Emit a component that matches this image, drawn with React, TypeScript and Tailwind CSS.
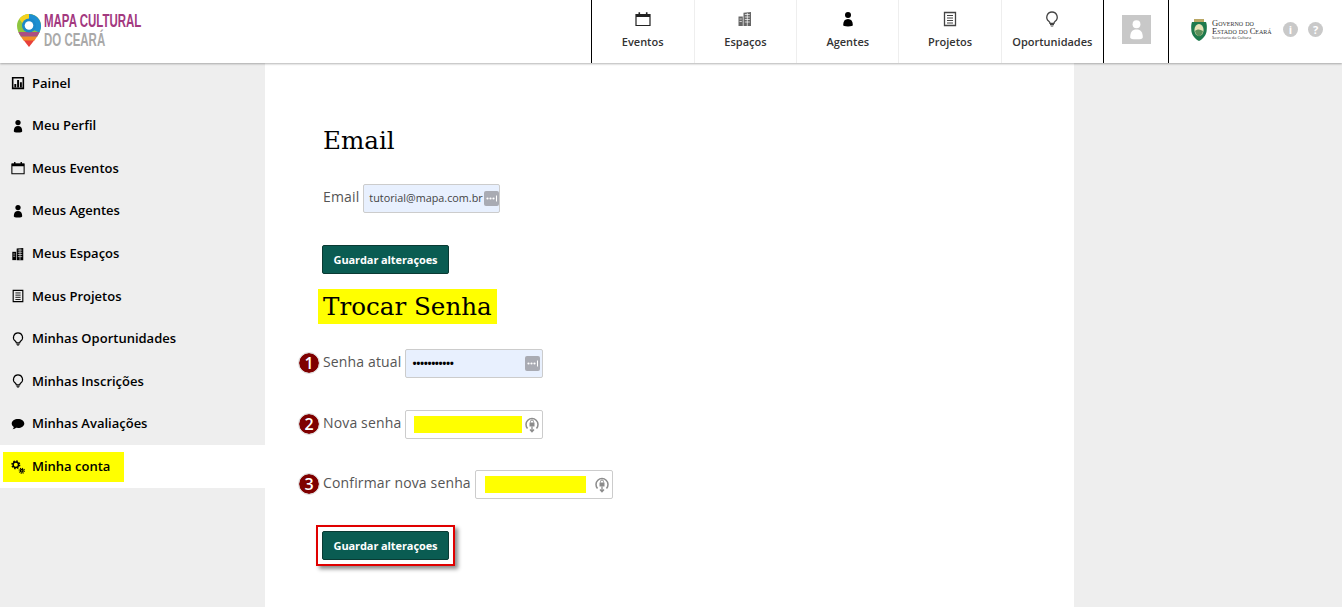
const navItems = [
  { label: "Eventos", icon: "calendar", tone: "text-[#222]" },
  { label: "Espaços", icon: "building", tone: "text-[#666]" },
  { label: "Agentes", icon: "person", tone: "text-black" },
  { label: "Projetos", icon: "doc", tone: "text-[#444]" },
  { label: "Oportunidades", icon: "bulb", tone: "text-[#444]" }
];

const sideItems = [
  { label: "Painel", icon: "chart" },
  { label: "Meu Perfil", icon: "person" },
  { label: "Meus Eventos", icon: "calendar" },
  { label: "Meus Agentes", icon: "person" },
  { label: "Meus Espaços", icon: "building" },
  { label: "Meus Projetos", icon: "doc" },
  { label: "Minhas Oportunidades", icon: "bulb" },
  { label: "Minhas Inscrições", icon: "bulb" },
  { label: "Minhas Avaliações", icon: "chat" }
];

function Glyph({ name, className }: { name: string; className?: string }) {
  return (
    <svg viewBox="0 0 16 16" className={className} fill="currentColor">
      {name === "calendar" && (
        <>
          <path d="M1 3.500h14v11H1z" fill="none" stroke="currentColor" strokeWidth="1.200" />
          <path d="M1 3h14v3H1z" />
          <path d="M3.500 1.200h1.600v3H3.500zM10.900 1.200h1.600v3h-1.600z" />
        </>
      )}
      {name === "building" && (
        <>
          <path d="M6.500 1.800l7.500-.8v14H6.500z" />
          <path d="M1.500 5.500h4.300V15H1.500z" />
          <path d="M7.800 3.500h5M7.800 6h5M7.800 8.500h5M7.800 11h5M2.500 8h2.300M2.500 10.500h2.300M10.300 2v13" stroke="#fff" strokeWidth="0.700" />
        </>
      )}
      {name === "person" && (
        <>
          <circle cx="8" cy="4" r="3" />
          <path d="M3.200 14c0-4 1.600-6 4.800-6s4.800 2 4.800 6c0 1-1.600 1.400-4.800 1.400S3.200 15 3.200 14z" />
        </>
      )}
      {name === "doc" && (
        <>
          <path d="M2.500 1.500h11v13h-11z" fill="none" stroke="currentColor" strokeWidth="1.300" />
          <path d="M5 4.500h6M5 7h6M5 9.500h6M5 12h6" stroke="currentColor" strokeWidth="1" />
        </>
      )}
      {name === "bulb" && (
        <>
          <path
            d="M8 1a5.200 5.200 0 0 0-3.200 9.300c.7.600 1.200 1.200 1.200 2h4c0-.8.500-1.400 1.200-2A5.200 5.200 0 0 0 8 1z"
            fill="none"
            stroke="currentColor"
            strokeWidth="1.300"
          />
          <path d="M6 13h4v1.200H6zM6.800 14.700h2.400v.8H6.800z" />
        </>
      )}
      {name === "chart" && (
        <>
          <path d="M1 1h14v14H1zM2.800 2.800v10.400h10.400V2.800z" fillRule="evenodd" />
          <path d="M3.800 9h2.200v4.200H3.800zM7 4.500h2.200v8.700H7zM10.200 7h2.200v6.200h-2.200z" />
        </>
      )}
      {name === "chat" && <path d="M8 2.200c4 0 7.200 2.300 7.200 5.200S12 12.600 8 12.600c-.8 0-1.500-.1-2.200-.2-.9.9-2.300 1.500-4 1.600.8-.8 1.300-1.700 1.400-2.600C1.700 10.400.8 9 .8 7.400.8 4.500 4 2.200 8 2.200z" />}
      {name === "gears" && (
        <>
          <circle cx="5.500" cy="5.500" r="4.300" fill="none" stroke="currentColor" strokeWidth="1.800" strokeDasharray="1.700 1.680" />
          <circle cx="5.500" cy="5.500" r="3.100" fill="none" stroke="currentColor" strokeWidth="1.700" />
          <circle cx="12.300" cy="12.300" r="3" fill="none" stroke="currentColor" strokeWidth="1.200" strokeDasharray="1.200 1.150" />
          <circle cx="12.300" cy="12.300" r="1.500" fill="none" stroke="currentColor" strokeWidth="1.600" />
        </>
      )}
    </svg>
  );
}

function PinLogo() {
  return (
    <svg viewBox="0 0 24 33" className="h-[33px] w-[24px] shrink-0">
      <path d="M12 33 6.500 26h11z" fill="#e8403a" />
      <path d="M3.500 22h17l-3 4.500h-11z" fill="#f28c28" />
      <path d="M12 0C5.400 0 0 5.300 0 11.800c0 3.900 1.500 7.300 3.800 10.700h16.400c2.300-3.400 3.800-6.800 3.800-10.700C24 5.300 18.600 0 12 0z" fill="#8ec63f" />
      <path d="M12 0C8 0 4.500 2 2.300 5l8 11 13.500-5C23.300 5 18.200 0 12 0z" fill="#f6d21f" />
      <path d="M12 0c6.600 0 12 5.300 12 11.800 0 2.400-.6 4.600-1.600 6.700L12 14z" fill="#1d8fd1" />
      <path d="M4 22.500c-1-1.500-1.900-3-2.600-4.600l21.200 0c-.7 1.600-1.500 3.100-2.500 4.600z" fill="#b0388f" opacity=".85" />
      <circle cx="12" cy="11.500" r="7" fill="#1c88c9" />
      <circle cx="12" cy="11.500" r="4.300" fill="#fff" />
    </svg>
  );
}

function Crest() {
  return (
    <svg viewBox="0 0 16 22" className="h-[22px] w-[16px] shrink-0">
      <path d="M3 0h10v3H3z" fill="#b9a765" />
      <path d="M1 3h14c1 3 1 5 .6 9-.4 4-3.600 8-7.600 10-4-2-7.200-6-7.600-10C0 8 0 6 1 3z" fill="#1f7a4d" />
      <ellipse cx="8" cy="11" rx="4.600" ry="6" fill="#e7e2b8" />
      <path d="M4 12c2-2 5-2 8 0-.5 3-2 5-4 5.500-2-.5-3.500-2.500-4-5.500z" fill="#5c8f5a" />
    </svg>
  );
}

function KeyBadge() {
  return (
    <svg viewBox="0 0 15 15" className="h-[15px] w-[15px] shrink-0">
      <rect width="15" height="15" rx="2" fill="#a9abb3" />
      <circle cx="3.500" cy="7.500" r="1.100" fill="#fff" />
      <circle cx="6.500" cy="7.500" r="1.100" fill="#fff" />
      <circle cx="9.500" cy="7.500" r="1.100" fill="#fff" />
      <path d="M12.500 4.500v6" stroke="#fff" strokeWidth="1" />
    </svg>
  );
}

function LockRefresh() {
  return (
    <svg viewBox="0 0 14 16" className="h-[16px] w-[14px] shrink-0 text-[#8c8c8c]" fill="none" stroke="currentColor">
      <path d="M2.500 11.500A6 6 0 1 1 11.500 11.500" strokeWidth="1.500" />
      <path d="M7 9.500v4.500M5 12.500l2 2.300 2-2.300" strokeWidth="1.300" />
      <rect x="4.500" y="5.500" width="5" height="4" fill="currentColor" stroke="none" />
      <path d="M5.500 5.500V4.500a1.500 1.500 0 0 1 3 0v1" strokeWidth="1" />
    </svg>
  );
}

function Marker({ n }: { n: number }) {
  return (
    <span className="absolute left-[-24px] top-1/2 flex h-[20px] w-[20px] -translate-y-[11px] items-center justify-center rounded-full bg-[#7f0000] text-[16px] font-semibold leading-none text-white outline outline-1 outline-[#ddd]">
      {n}
    </span>
  );
}

function Field({
  label,
  marker,
  children,
  filled,
  width = "w-[138px]"
}: {
  label: string;
  marker?: number;
  children: React.ReactNode;
  filled?: boolean;
  width?: string;
}) {
  return (
    <div className="relative flex items-center gap-[4px]">
      {marker && <Marker n={marker} />}
      <span className="pb-[3px] text-[14px] leading-[20px] tracking-[0.15px] text-[#555]">{label}</span>
      <div
        className={`flex h-[29px] ${width} items-center justify-between rounded-[2px] border border-[#ccc] ${
          filled ? "bg-[#e8f0fe]" : "bg-white"
        }`}
      >
        {children}
      </div>
    </div>
  );
}

function SaveButton() {
  return (
    <button className="h-[29px] w-[127px] rounded-[2px] border border-[#0a3a33] bg-[#0a5c52] pt-px text-[11px] font-bold tracking-[-0.1px] text-white">
      Guardar alteraçoes
    </button>
  );
}

export default function App() {
  return (
    <div className="flex h-[607px] w-[1342px] flex-col overflow-hidden bg-white font-['Open_Sans',sans-serif]">
      <header className="relative z-10 flex h-[63px] shrink-0 items-stretch justify-between bg-white shadow-[0_1px_2px_rgba(0,0,0,0.3)]">
        <div className="flex items-center gap-[3px] pb-[3px] pl-[17px]">
          <PinLogo />
          <div className="font-['Liberation_Sans',sans-serif] text-[18.500px] font-bold leading-[19px]">
            <div className="origin-left scale-x-[0.62] whitespace-nowrap text-[#a3397f]">MAPA CULTURAL</div>
            <div className="origin-left scale-x-[0.62] whitespace-nowrap text-[#a9a9a9]">DO CEARÁ</div>
          </div>
        </div>
        <div className="flex items-stretch">
          <nav className="flex border-l border-black">
            {navItems.map((item, i) => (
              <div
                key={item.label}
                className={`flex w-[102.300px] flex-col items-center pt-[11px] ${i > 0 ? "border-l border-[#eee]" : ""}`}
              >
                <Glyph name={item.icon} className={`h-[16px] w-[16px] ${item.tone}`} />
                <span className="mt-[7px] whitespace-nowrap text-[11px] font-semibold text-[#333]">
                  {item.label}
                </span>
              </div>
            ))}
          </nav>
          <div className="flex w-[66px] items-center justify-center border-x border-black pb-[4px]">
            <div className="flex h-[29px] w-[29px] items-center justify-center bg-[#c8c8c8]">
              <Glyph name="person" className="h-[21px] w-[21px] text-white" />
            </div>
          </div>
          <div className="flex w-[173px] items-center pb-[4px] pl-[22px]">
            <Crest />
            <div className="ml-[5px] w-[62px] font-['Liberation_Serif',serif] text-[8.500px] leading-[8px] text-[#333] [font-variant:small-caps]">
              <div className="whitespace-nowrap">Governo do</div>
              <div className="whitespace-nowrap">Estado do Ceará</div>
              <div className="whitespace-nowrap font-['Open_Sans',sans-serif] text-[4px] leading-[5px] [font-variant:normal]">Secretaria da Cultura</div>
            </div>
            <span className="ml-[9px] flex h-[15px] w-[15px] items-center justify-center rounded-full bg-[#c9c9c9] text-[11px] font-bold leading-none text-white">
              i
            </span>
            <span className="ml-[10px] flex h-[15px] w-[15px] items-center justify-center rounded-full bg-[#c9c9c9] text-[11px] font-bold leading-none text-white">
              ?
            </span>
          </div>
        </div>
      </header>

      <div className="flex min-h-0 flex-1">
        <aside className="-mt-px w-[265px] shrink-0 bg-[#eee]">
          {sideItems.map((item) => (
            <div key={item.label} className="flex h-[42.600px] items-center gap-[7px] pl-[11px] text-[13px] font-semibold text-black">
              <Glyph name={item.icon} className="h-[14px] w-[14px] shrink-0" />
              {item.label}
            </div>
          ))}
          <div className="flex h-[42.600px] items-center bg-white pl-[3px]">
            <div className="flex h-[30px] w-[121px] items-center gap-[7px] bg-[#ff0] pl-[8px] text-[13px] font-semibold text-black">
              <Glyph name="gears" className="h-[14px] w-[14px] shrink-0" />
              Minha conta
            </div>
          </div>
        </aside>

        <main className="flex w-[809px] shrink-0 flex-col items-start bg-white pl-[57px] pt-[60px]">
          <h2 className="ml-px h-[36px] font-['DejaVu_Serif',serif] text-[24.600px] leading-[36px] text-black">Email</h2>
          <div className="ml-px mt-[25px]">
            <Field label="Email" filled width="w-[137px]">
              <span className="whitespace-nowrap pl-[5px] text-[10.800px] text-[#444]">tutorial@mapa.com.br</span>
              <KeyBadge />
            </Field>
          </div>
          <div className="mt-[32px]">
            <SaveButton />
          </div>
          <h2 className="-ml-[4px] mt-[15px] h-[35px] bg-[#ff0] px-[5px] font-['DejaVu_Serif',serif] text-[24.600px] leading-[35px] text-black">
            Trocar Senha
          </h2>
          <div className="ml-px mt-[25px]">
            <Field label="Senha atual" marker={1} filled>
              <span className="pl-[6px] text-[11px] font-bold tracking-[-0.4px] text-black">•••••••••••</span>
              <span className="pr-[2px]">
                <KeyBadge />
              </span>
            </Field>
          </div>
          <div className="ml-px mt-[32px]">
            <Field label="Nova senha" marker={2}>
              <span className="ml-[8px] h-[17px] w-[108px] bg-[#ff0]" />
              <span className="pr-[3px]">
                <LockRefresh />
              </span>
            </Field>
          </div>
          <div className="ml-px mt-[31px]">
            <Field label="Confirmar nova senha" marker={3}>
              <span className="ml-[9px] h-[17px] w-[101px] bg-[#ff0]" />
              <span className="pr-[3px]">
                <LockRefresh />
              </span>
            </Field>
          </div>
          <div className="-ml-[6px] mt-[26px] w-fit border-2 border-[#e00000] bg-white p-[4px] shadow-[3px_3px_4px_rgba(0,0,0,0.45)]">
            <SaveButton />
          </div>
        </main>

        <div className="flex-1 bg-[#eee]" />
      </div>
    </div>
  );
}
